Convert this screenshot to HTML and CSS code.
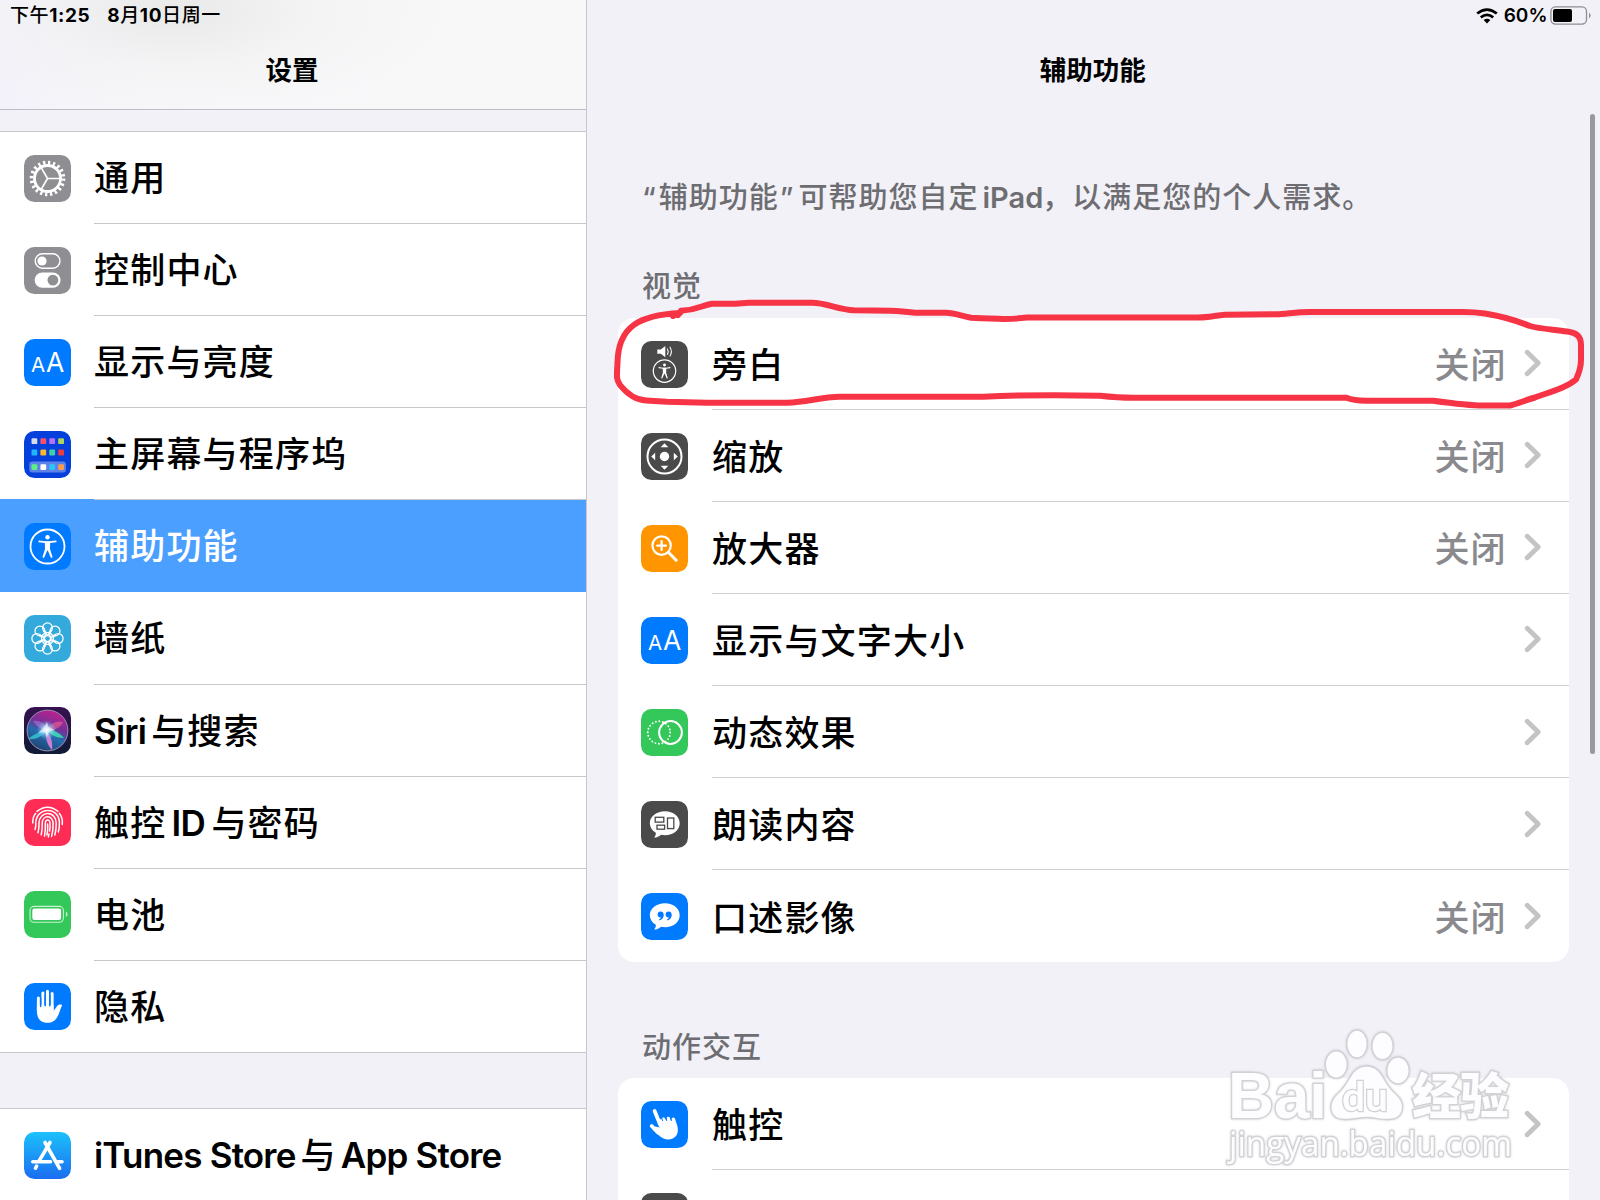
FILE: index.html
```html
<!DOCTYPE html>
<html lang="zh-CN">

<head>
    <meta charset="UTF-8">
    <meta name="viewport" content="width=device-width, initial-scale=1.0">
    <title>设置</title>
    <link rel="stylesheet" href="styles.css">
</head>

<body>
    <!-- Shared shapes -->
    <svg class="defs" width="0" height="0">
        <defs>
            <symbol id="chevron" viewBox="0 0 18 28">
                <path d="M3.2 3.2L14.2 14L3.2 24.8" fill="none" stroke="#c4c4c6" stroke-width="4.8" stroke-linecap="round" stroke-linejoin="round" />
            </symbol>
            <symbol id="person" viewBox="0 0 47 47">
                <circle cx="23.5" cy="23.5" r="17" fill="none" stroke="#fff" stroke-width="1.8" />
                <circle cx="23.5" cy="14.3" r="2.2" fill="#fff" />
                <path d="M15.2 18.3L21 19.2H26L31.8 18.3" fill="none" stroke="#fff" stroke-width="1.7" stroke-linecap="round" />
                <path d="M20.8 18.6H26.2L26 26L28.6 34.3L27 34.9L23.8 27.5H23.2L20 34.9L18.4 34.3L21 26Z" fill="#fff" />
            </symbol>
            <symbol id="letters" viewBox="0 0 47 47">
                <text x="14.2" y="33.3" font-size="20.5">A</text>
                <text x="31.2" y="33.3" font-size="26.5">A</text>
            </symbol>
            <linearGradient id="storeBlue" x1="0" y1="0" x2="0" y2="1">
                <stop offset="0" stop-color="#1cc1fb" />
                <stop offset="1" stop-color="#1b6df0" />
            </linearGradient>
            <linearGradient id="siriBack" x1="0" y1="0" x2="0" y2="1">
                <stop offset="0" stop-color="#35124f" />
                <stop offset="1" stop-color="#101a35" />
            </linearGradient>
            <linearGradient id="siriBall" x1=".7" y1="0" x2=".3" y2="1">
                <stop offset="0" stop-color="#c61e8c" />
                <stop offset=".38" stop-color="#763097" />
                <stop offset=".6" stop-color="#246cae" />
                <stop offset="1" stop-color="#20416f" />
            </linearGradient>
            <radialGradient id="siriGlow">
                <stop offset="0" stop-color="#fff" />
                <stop offset=".3" stop-color="#b9e8ff" stop-opacity=".8" />
                <stop offset="1" stop-color="#58b9ef" stop-opacity="0" />
            </radialGradient>
        </defs>
    </svg>

    <div class="screen">
        <aside class="sidebar">
            <header class="sidebar-header">
                <div class="status"><span>下午<b>1:25</b></span><span><b>8</b>月<b>10</b>日周一</span></div>
                <h1>设置</h1>
            </header>

            <ul class="menu">
                <li>
                    <svg class="icon gray" viewBox="0 0 47 47">
                        <g fill="none" stroke="#fff">
                            <circle cx="23.5" cy="23.5" r="13" stroke-width="2.8" />
                            <circle cx="23.5" cy="23.5" r="15.8" stroke-width="4" stroke-dasharray="2.3 2.664" />
                            <path d="M23.5 23.5H36M23.5 23.5L17.2 12.6M23.5 23.5L17.2 34.4" stroke-width="1.7" />
                        </g>
                    </svg>
                    <span class="label">通用</span>
                </li>
                <li>
                    <svg class="icon gray" viewBox="0 0 47 47">
                        <rect x="11.2" y="6.8" width="24.8" height="14.4" rx="7.2" fill="none" stroke="#fff" stroke-width="1.4" />
                        <circle cx="18" cy="14" r="4.6" fill="#fff" />
                        <rect x="10.6" y="25.4" width="26" height="15.4" rx="7.7" fill="#fff" />
                        <circle cx="28.9" cy="33.1" r="5.4" fill="#8e8e93" />
                    </svg>
                    <span class="label">控制中心</span>
                </li>
                <li>
                    <svg class="icon blue" viewBox="0 0 47 47"><use href="#letters" /></svg>
                    <span class="label">显示与亮度</span>
                </li>
                <li>
                    <svg class="icon home" viewBox="0 0 47 47">
                        <rect x="5.3" y="30.6" width="36.6" height="11" rx="3" fill="#fff" opacity=".35" />
                        <rect x="7.5" y="7.3" width="5.8" height="5.8" rx="1.2" fill="#d6dbe8" />
                        <rect x="16.4" y="7.3" width="5.8" height="5.8" rx="1.2" fill="#f8506a" />
                        <rect x="25.3" y="7.3" width="5.8" height="5.8" rx="1.2" fill="#b670fb" />
                        <rect x="34.2" y="7.3" width="5.8" height="5.8" rx="1.2" fill="#add45b" />
                        <rect x="7.5" y="18.6" width="5.8" height="5.8" rx="1.2" fill="#1fb4fb" />
                        <rect x="16.4" y="18.6" width="5.8" height="5.8" rx="1.2" fill="#fdb827" />
                        <rect x="25.3" y="18.6" width="5.8" height="5.8" rx="1.2" fill="#3fd2a8" />
                        <rect x="34.2" y="18.6" width="5.8" height="5.8" rx="1.2" fill="#ee3b3e" />
                        <rect x="7.5" y="33.2" width="5.8" height="5.8" rx="1.2" fill="#5fee86" />
                        <rect x="16.4" y="33.2" width="5.8" height="5.8" rx="1.2" fill="#fff" />
                        <rect x="25.3" y="33.2" width="5.8" height="5.8" rx="1.2" fill="#2cc5fb" />
                        <rect x="34.2" y="33.2" width="5.8" height="5.8" rx="1.2" fill="#fb9c4e" />
                    </svg>
                    <span class="label">主屏幕与程序坞</span>
                </li>
                <li class="selected">
                    <svg class="icon blue" viewBox="0 0 47 47"><use href="#person" /></svg>
                    <span class="label">辅助功能</span>
                </li>
                <li>
                    <svg class="icon cyan" viewBox="0 0 47 47">
                        <g fill="none" stroke="#fff" stroke-width="1.25">
                            <circle cx="23.5" cy="23.5" r="3" />
                            <g id="petals">
                                <path d="M23.5 20.5L19.5 15.5M23.5 20.5L27.5 15.5" />
                                <circle cx="23.5" cy="12.8" r="4.9" />
                                <path d="M20.5 23.5L15.5 19.5M20.5 23.5L15.5 27.5" />
                                <circle cx="12.8" cy="23.5" r="4.9" />
                                <path d="M23.5 26.5L19.5 31.5M23.5 26.5L27.5 31.5" />
                                <circle cx="23.5" cy="34.2" r="4.9" />
                                <path d="M26.5 23.5L31.5 19.5M26.5 23.5L31.5 27.5" />
                                <circle cx="34.2" cy="23.5" r="4.9" />
                            </g>
                            <use href="#petals" transform="rotate(45 23.5 23.5)" />
                        </g>
                    </svg>
                    <span class="label">墙纸</span>
                </li>
                <li>
                    <svg class="icon" viewBox="0 0 47 47">
                        <rect width="47" height="47" fill="url(#siriBack)" />
                        <circle cx="23.5" cy="23.5" r="20.4" fill="url(#siriBall)" stroke="#9a92b8" stroke-width="1" />
                        <path d="M23 23C16 25 9 27 4.5 32C12 33 19 29 23 23Z" fill="#35c8d8" opacity=".8" />
                        <path d="M23 22C30 23 36 26 40 31C32 31 26 28 23 22Z" fill="#3be3b3" opacity=".85" />
                        <path d="M22 23C27 29 29 35 28 43C23 38 21 30 22 23Z" fill="#e183dc" opacity=".9" />
                        <path d="M23 24C15 22 12 18 9 14C17 13 22 17 23 24Z" fill="#a977d5" opacity=".6" />
                        <path d="M22 23C27 16 33 13 39 15C37 20 31 24 22 23Z" fill="#ed6497" opacity=".6" />
                        <circle cx="22.5" cy="23" r="10" fill="url(#siriGlow)" />
                        <path d="M23 15L24.5 20L31 23L25 24.5L23 30L21 25L14 26L20 20Z" fill="#fff" opacity=".6" />
                    </svg>
                    <span class="label"><b>Siri</b>与搜索</span>
                </li>
                <li>
                    <svg class="icon pink" viewBox="0 0 47 47">
                        <g fill="none" stroke="#fff" stroke-width="1.5" stroke-linecap="round">
                            <path d="M13 12.4Q23.5 4.2 34 12.4" />
                            <path d="M8.8 24Q8.6 17.5 11.6 14.4M35.4 14.4Q39 18.5 38.3 25.5" />
                            <path d="M11 30.5Q12 28 11.8 24C11.8 17 17 11.4 23.8 11.4C31 11.4 35.4 17 35.4 24Q35.5 29 34.3 33" />
                            <path d="M14 33.8Q15.2 29 15 24C15 18.5 19 14.6 23.8 14.6C29 14.6 32.2 19 32.2 24Q32.3 31 30.8 36" />
                            <path d="M17.2 35.8Q18.5 30 18.2 24.5C18.2 20.5 20.6 17.8 23.7 17.8C27 17.8 29.1 21 29.1 24.5Q29.3 31.5 27.6 37.4" />
                            <path d="M20.5 37.2Q21.6 31 21.3 25C21.3 22.5 22 21 23.6 21C25.3 21 26 22.8 26 25Q26.2 29 25.6 32M24.9 35L24.4 38" />
                            <path d="M23.6 25Q24 32 22.9 36" />
                        </g>
                    </svg>
                    <span class="label">触控<b class="mid">ID</b>与密码</span>
                </li>
                <li>
                    <svg class="icon green" viewBox="0 0 47 47">
                        <rect x="6" y="15.4" width="33.4" height="15.8" rx="4" fill="none" stroke="#fff" stroke-width="1.1" opacity=".75" />
                        <rect x="8.3" y="17.6" width="28.8" height="11.4" rx="2.2" fill="#fff" />
                        <path d="M41.8 20.3Q45.6 23.3 41.8 26.3Z" fill="#fff" opacity=".7" />
                    </svg>
                    <span class="label">电池</span>
                </li>
                <li>
                    <svg class="icon blue" viewBox="0 0 47 47">
                        <g fill="none" stroke="#fff" stroke-width="3" stroke-linecap="round">
                            <path d="M14.4 15V28M18.9 10V26M23.5 8.3V26M28.1 10.6V26" />
                        </g>
                        <path d="M12.9 22H29.6V27.5C31.5 27 32.4 22.2 35.5 21.6C37.3 21.3 38.6 21.6 37.7 23.3C35 28 34.6 39.8 23.6 39.8C16 39.8 12.9 35 12.9 28Z" fill="#fff" />
                        <path d="M16.65 15V23.5M21.2 12V22.8M25.8 12V22.8" stroke="#007aff" stroke-width="1.5" stroke-linecap="round" />
                    </svg>
                    <span class="label">隐私</span>
                </li>
            </ul>

            <ul class="menu">
                <li>
                    <svg class="icon" viewBox="0 0 47 47">
                        <rect width="47" height="47" fill="url(#storeBlue)" />
                        <g fill="none" stroke="#fff" stroke-width="3.6" stroke-linecap="round">
                            <path d="M26 10.5L14.8 29.3M21 10.5L35.6 36.3M8.8 29.8H26.5M33.8 29.8H38M12.6 34.2L11.5 36.2" />
                        </g>
                    </svg>
                    <span class="label"><b>iTunes Store</b>与<b>App Store</b></span>
                </li>
            </ul>
        </aside>

        <main class="content">
            <div class="status status-right">
                <svg width="22" height="16" viewBox="0 0 22 16">
                    <g fill="none" stroke="#000" stroke-width="2.7">
                        <path d="M1.2 5.5Q11 -2.4 20.8 5.5" />
                        <path d="M4.8 9.4Q11 4.4 17.2 9.4" />
                    </g>
                    <path d="M7.6 12Q11 9.3 14.4 12L11 15.4Z" />
                </svg>
                <b>60%</b>
                <svg width="42" height="20" viewBox="0 0 42 20">
                    <rect x=".9" y=".9" width="35.6" height="17.2" rx="4.5" fill="none" stroke="#8d8d91" stroke-width="1.3" />
                    <rect x="3" y="3" width="19" height="13" rx="2" />
                    <path d="M39 6.5Q42.2 9.5 39 12.5Z" fill="#8d8d91" />
                </svg>
            </div>
            <h2>辅助功能</h2>
            <p class="intro"><span class="open">“</span>辅助功能<span class="close">”</span>可帮助您自定<b>iPad</b><span class="cjk">，</span>以满足您的个人需求。</p>

            <h3>视觉</h3>
            <ul class="card">
                <li>
                    <svg class="icon dark" viewBox="0 0 47 47">
                        <path d="M16.3 8.5H19.8L24.3 5V16.2L19.8 12.7H16.3Z" fill="#fff" />
                        <path d="M26.4 8Q28 10.6 26.4 13.3M29 6.2Q31.7 10.6 29 15" fill="none" stroke="#fff" stroke-width="1.1" stroke-linecap="round" />
                        <use href="#person" x="8" y="14.6" width="31" height="31" />
                    </svg>
                    <div class="line"><span class="label">旁白</span><span class="value">关闭</span><svg class="chevron"><use href="#chevron" /></svg></div>
                </li>
                <li>
                    <svg class="icon dark" viewBox="0 0 47 47">
                        <circle cx="23.5" cy="23.5" r="17" fill="none" stroke="#fff" stroke-width="2" />
                        <circle cx="23.5" cy="23.5" r="4.7" fill="#fff" />
                        <path d="M23.5 10.2L27.3 14.2H19.7ZM23.5 36.8L27.3 32.8H19.7ZM10.2 23.5L14.2 19.7V27.3ZM36.8 23.5L32.8 19.7V27.3Z" fill="#fff" />
                    </svg>
                    <div class="line"><span class="label">缩放</span><span class="value">关闭</span><svg class="chevron"><use href="#chevron" /></svg></div>
                </li>
                <li>
                    <svg class="icon orange" viewBox="0 0 47 47">
                        <g fill="none" stroke="#fff" stroke-width="2.2" stroke-linecap="round">
                            <circle cx="20.6" cy="20.6" r="9.2" />
                            <path d="M20.6 16.2V25M16.2 20.6H25" />
                            <path d="M27.8 27.8L35.2 35.2" stroke-width="3" />
                        </g>
                    </svg>
                    <div class="line"><span class="label">放大器</span><span class="value">关闭</span><svg class="chevron"><use href="#chevron" /></svg></div>
                </li>
                <li>
                    <svg class="icon blue" viewBox="0 0 47 47"><use href="#letters" /></svg>
                    <div class="line"><span class="label">显示与文字大小</span><svg class="chevron"><use href="#chevron" /></svg></div>
                </li>
                <li>
                    <svg class="icon green" viewBox="0 0 47 47">
                        <circle cx="18" cy="23.5" r="11.2" fill="none" stroke="#fff" stroke-width="1.9" stroke-linecap="round" stroke-dasharray="0 3.519" />
                        <circle cx="29.5" cy="23.5" r="11.4" fill="none" stroke="#fff" stroke-width="2" />
                    </svg>
                    <div class="line"><span class="label">动态效果</span><svg class="chevron"><use href="#chevron" /></svg></div>
                </li>
                <li>
                    <svg class="icon dark" viewBox="0 0 47 47">
                        <path d="M24 10.3C32.5 10.3 38.7 15.3 38.7 22.3C38.7 29.3 32.5 34.2 24 34.2C22.5 34.2 21.2 34.1 20 33.8C18 35.8 15.6 36.7 13.2 36.6C14.4 35 15 33.4 14.8 31.8C11.2 29.6 8.8 26.3 8.8 22.3C8.8 15.3 15.5 10.3 24 10.3Z" fill="#fff" />
                        <g fill="none" stroke="#4a4a4a" stroke-width="1.3">
                            <rect x="14.2" y="16.3" width="8.6" height="4.8" />
                            <rect x="16" y="24.2" width="7.6" height="4" />
                            <rect x="26.5" y="17" width="6.3" height="10.6" />
                        </g>
                    </svg>
                    <div class="line"><span class="label">朗读内容</span><svg class="chevron"><use href="#chevron" /></svg></div>
                </li>
                <li>
                    <svg class="icon blue" viewBox="0 0 47 47">
                        <path d="M24 10.3C32.5 10.3 38.7 15.3 38.7 22.3C38.7 29.3 32.5 34.2 24 34.2C22.5 34.2 21.2 34.1 20 33.8C18 35.8 15.6 36.7 13.2 36.6C14.4 35 15 33.4 14.8 31.8C11.2 29.6 8.8 26.3 8.8 22.3C8.8 15.3 15.5 10.3 24 10.3Z" fill="#fff" />
                        <g fill="#007aff">
                            <circle cx="19.6" cy="21.6" r="3" />
                            <circle cx="27.6" cy="21.6" r="3" />
                            <path d="M22.6 21.5Q22.7 26 18.6 27.5L18 26.5Q20 25.3 20.3 23.5ZM30.6 21.5Q30.7 26 26.6 27.5L26 26.5Q28 25.3 28.3 23.5Z" />
                        </g>
                    </svg>
                    <div class="line"><span class="label">口述影像</span><span class="value">关闭</span><svg class="chevron"><use href="#chevron" /></svg></div>
                </li>
            </ul>

            <h3>动作交互</h3>
            <ul class="card">
                <li>
                    <svg class="icon blue" viewBox="0 0 47 47">
                        <g fill="none" stroke="#fff" stroke-width="3.8" stroke-linecap="round">
                            <path d="M13.6 10L19.5 24.5M10.7 25L17 31.5" />
                            <path d="M22.3 18.5L24 24M27.3 17.8L28.5 24M32.3 18.5L33 24" stroke-width="4" />
                        </g>
                        <path d="M17 18L34.3 19.5C37.2 25.5 38.2 31.5 34.5 35.5C31.5 38.8 26.5 39.3 22.5 37.5C18.5 35.7 15 31.5 11.5 28.5L14 25.5L19 26.5Z" fill="#fff" />
                        <path d="M20.2 15L21.6 19.6M24.9 15.5L25.7 19.6M29.7 15.5L30.3 19.6" stroke="#007aff" stroke-width="1" stroke-linecap="round" />
                    </svg>
                    <div class="line"><span class="label">触控</span><svg class="chevron"><use href="#chevron" /></svg></div>
                </li>
                <li>
                    <svg class="icon dark" viewBox="0 0 47 47"></svg>
                    <div class="line"><span class="label">切换控制</span></div>
                </li>
            </ul>
        </main>

        <div class="scrollbar"></div>

        <!-- Hand-drawn marker round the first row -->
        <svg class="marker" viewBox="0 0 1600 1200">
            <path d="M673 316L680 313C640 315 618 326 617.5 363C616.5 378 616.5 380 620 385C628 395 637 400 646 400.5L667 401.7L707 402.7H787C808 402 820 397 840 396.8L983 396.7C1020 395 1070 395 1100 395.7C1112 397 1122 397.7 1133 397.7H1346.5C1352 400 1356 400.6 1366 400.7H1433C1450 403 1470 405.5 1483 405.5H1510C1518 403.5 1526 400 1535 397.5C1550 392 1566 388 1576 379.5C1579 373 1581 366 1581 360V345C1581 336 1577 333 1567 331.5C1555 329.5 1540 329 1530 326C1515 320 1500 316 1485 313.5C1478 312.5 1472 312 1463 312H1310C1295 312 1286 314.3 1276 314.3L1225 314.7C1215 315.5 1209 317.5 1198 317.5L1027 317.5C1017 318.7 1008 319.2 999 318.7C990 318.5 980 318.3 971 317.7C962 316 955 313 946 312.7H915C905 312 900 310.7 890 310.7L854 310.3C838 309.5 826 302.7 812 302.7H749C742 303 738 303.7 731 303.7H712C702 305 698 310 681 310.7L678 315" />
        </svg>

        <svg class="watermark" viewBox="0 0 300 150">
            <g class="mark">
                <ellipse cx="116.3" cy="44.5" rx="11" ry="13.8" />
                <ellipse cx="137" cy="24" rx="10.3" ry="14" />
                <ellipse cx="162.5" cy="26" rx="10.6" ry="13.8" />
                <ellipse cx="178" cy="50.5" rx="11.2" ry="13.5" />
                <path d="M146.5 46C163 46 163 64 176 74C187 84 184 99 169 99.5C160 100 156 97.5 147 97.5C138 97.5 133 100 124 99.5C109 99 107 84 117 74C130 64 130 46 146.5 46Z" />
                <text class="latin" x="8" y="98" font-size="64" textLength="99" lengthAdjust="spacingAndGlyphs">Bai</text>
                <text class="du" x="122" y="91" font-size="41" textLength="46" lengthAdjust="spacingAndGlyphs">du</text>
                <text class="han" x="192" y="94" font-size="49" textLength="97">经验</text>
                <text class="site" x="9" y="136" font-size="34" textLength="283" lengthAdjust="spacingAndGlyphs">jingyan.baidu.com</text>
            </g>
        </svg>
    </div>
</body>

</html>
```
FILE: styles.css
```css
* {
    box-sizing: border-box;
}
body {
    margin: 0;
    font-family: Inter, "Noto Sans CJK SC", sans-serif;
    color: #000;
    background-color: #f2f1f7;
}
h1, h2, h3, p, ul {
    margin: 0;
    padding: 0;
}
ul {
    list-style: none;
}
.defs {
    display: block;
}
.screen {
    position: relative;
    display: flex;
    width: 1600px;
    height: 1200px;
    overflow: hidden;
}

/* Left column */
.sidebar {
    width: 587px;
    flex: none;
    border-right: 1px solid #c8c8cc;
}
.sidebar-header {
    height: 110px;
    border-bottom: 1px solid #bdbdc3;
    background: radial-gradient(ellipse 280px 110px at 175px 12px, #e9e9ea, rgba(241, 241, 242, .6) 50%, rgba(248, 248, 249, 0)), linear-gradient(90deg, #f3f2fb, #f8f8fa 25%, #f8f8f9);
}
.status {
    display: flex;
    align-items: center;
    gap: 17px;
    height: 31px;
    padding-left: 10px;
    font-size: 19px;
    font-weight: 500;
    line-height: 31px;
    letter-spacing: .6px;
    white-space: nowrap;
}
.status b {
    font-weight: 700;
}
h1, h2 {
    font-size: 26.5px;
    font-weight: 600;
    line-height: 40px;
    text-align: center;
}
h1 {
    padding-top: 19px;
    margin-left: -2px;
}
.menu {
    margin-top: 21px;
    border-top: 1px solid #c8c8cc;
    border-bottom: 1px solid #c8c8cc;
    background-color: #fff;
}
.menu + .menu {
    margin-top: 55px;
    border-bottom: none;
}
.menu li, .card li {
    display: flex;
    align-items: center;
    gap: 23.5px;
    height: 92.1px;
    padding-left: 23.5px;
}
.menu li:last-child {
    height: 91.5px;
}
.label {
    font-size: 35px;
    font-weight: 500;
    letter-spacing: 1.2px;
    white-space: nowrap;
}
/* Latin words sit tighter than the Chinese ones and keep a gap to them */
.label b {
    font-weight: 600;
    letter-spacing: -.8px;
    margin: 0 5px 0 4px;
}
.label b:first-child {
    margin-left: 0;
}
.label b.mid {
    margin: 0 6px 0 5px;
    letter-spacing: -.5px;
}
.menu .label {
    flex: 1;
    height: 100%;
    line-height: 93px;
    border-bottom: 1px solid #c8c8cc;
}
.menu:first-of-type li:last-child .label {
    border-bottom: none;
}
.menu li.selected {
    margin-top: -1px;
    padding-top: 1px;
    height: 93.1px;
    color: #fff;
    background-color: #4ba0ff;
}
.menu .selected .label {
    border-bottom: none;
}

/* Icons */
.icon {
    width: 47px;
    height: 47px;
    flex: none;
    border-radius: 10.5px;
}
.gray {
    background-color: #8e8e93;
}
.blue {
    background-color: #007aff;
}
.home {
    background-color: #0540dc;
}
.cyan {
    background-color: #34aadc;
}
.pink {
    background-color: #ff2d55;
}
.green {
    background-color: #34c759;
}
.dark {
    background-color: #4a4a4a;
}
.orange {
    background-color: #ff9500;
}
#letters text {
    font-family: Inter, sans-serif;
    font-weight: 400;
    fill: #fff;
    text-anchor: middle;
}

/* Right column */
.content {
    flex: 1;
    padding: 0 31.5px 0 31px;
}
.status-right {
    justify-content: flex-end;
    gap: 4px;
    margin-right: -23px;
    padding-left: 0;
}
.status-right b {
    margin: 0 -2px 0 2px;
    font-weight: 600;
    letter-spacing: 0;
}
h2 {
    padding-top: 19px;
    height: 60px;
    margin-left: -1px;
}
.intro, h3 {
    padding-left: 24px;
    font-size: 29px;
    font-weight: 500;
    line-height: 40px;
    letter-spacing: 1px;
    color: #6d6d72;
}
.intro {
    padding-top: 84px;
    height: 146px;
    white-space: nowrap;
}
.intro b {
    font-weight: 600;
    letter-spacing: 0;
    margin-left: 4px;
}
.open {
    margin-right: 2px;
}
.close {
    margin: 0 4px 0 1px;
}
.cjk {
    font-family: "Noto Sans CJK SC", sans-serif;
    margin-left: -1px;
}
h3 {
    padding-top: 30px;
    height: 80.8px;
}
.card {
    border-radius: 16px;
    background-color: #fff;
}
.card + h3 {
    padding-top: 66px;
    height: 115.9px;
}
.card li {
    height: 92.05px;
    padding-left: 23px;
    gap: 24px;
}
.card .icon {
    margin-top: 1px;
}
.line {
    display: flex;
    align-items: center;
    flex: 1;
    height: 100%;
    padding-right: 27px;
    border-bottom: 1px solid #d0d0d4;
}
.card li:last-child .line {
    border-bottom: none;
}
.line .label, .value {
    padding-bottom: 2px;
}
.line .label {
    flex: 1;
}
.value {
    font-size: 35px;
    font-weight: 500;
    letter-spacing: 1px;
    color: #8a8a8e;
}
.chevron {
    width: 18px;
    height: 28px;
    margin-left: 17px;
}

/* Things lying over the page */
.scrollbar {
    position: absolute;
    top: 114px;
    right: 5px;
    width: 5px;
    height: 640px;
    border-radius: 3px;
    background-color: #98989d;
}
.marker {
    position: absolute;
    top: 0;
    left: 0;
    width: 1600px;
    height: 1200px;
}
.marker path {
    fill: none;
    stroke: #f73445;
    stroke-width: 6;
    stroke-linecap: round;
    stroke-linejoin: round;
}
.watermark {
    position: absolute;
    left: 1220px;
    top: 1020px;
    width: 300px;
    height: 150px;
}
.mark {
    fill: #fdfdff;
    stroke: #d2d2d6;
    stroke-width: 1.4;
    filter: drop-shadow(0 0 1px rgba(120, 120, 125, .35));
}
.mark text {
    paint-order: stroke;
    stroke-width: 2.6;
}
.latin {
    font-family: "Liberation Sans", sans-serif;
    font-weight: 700;
}
.du {
    font-family: Lato, sans-serif;
    font-weight: 700;
}
.han {
    font-family: "Noto Sans CJK SC", sans-serif;
    font-weight: 900;
}
.site {
    font-family: "Open Sans", sans-serif;
}
```
